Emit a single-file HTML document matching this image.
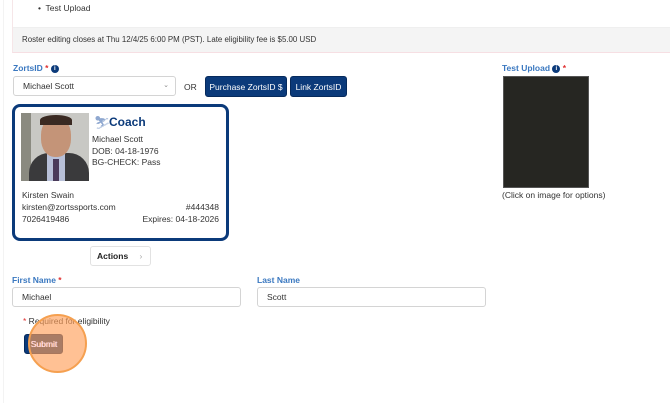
<!DOCTYPE html>
<html><head><style>
*{box-sizing:border-box;margin:0;padding:0}
body{width:670px;height:403px;background:#fff;font-family:"Liberation Sans",Arial,sans-serif;font-size:8.5px;color:#333;position:relative;overflow:hidden}
.a{position:absolute}
.lbl{color:#3a78c0;font-weight:bold;font-size:8.5px}
.req{color:#e03030}
.info{display:inline-block;width:8px;height:8px;border-radius:50%;background:#0b3a7a;color:#fff;font-size:6px;text-align:center;line-height:8px;font-weight:bold;vertical-align:1px}
.inp{border:1px solid #d4d4d4;border-radius:3px;background:#fff;padding-left:9px;line-height:18px;font-size:8.5px;color:#333}
.btn{background:#0b3a7a;color:#fff;border-radius:3px;text-align:center;font-size:8.5px;line-height:20px;border:1px solid #062a5c}
</style></head><body>
<div class="a" style="left:3px;top:0;width:1px;height:403px;background:#f3f3f3"></div>
<div class="a" style="left:12px;top:0;width:660px;height:53px;border-left:1px solid #f6e6e8;border-bottom:1px solid #f6dfe3;background:#fff"></div>
<div class="a" style="left:13px;top:27px;width:660px;height:25px;background:#f4f4f4;border-top:1px solid #efefef"></div>
<div class="a" style="left:38px;top:3px;font-size:8.5px">•&nbsp; Test Upload</div>
<div class="a" style="left:22px;top:35px;font-size:7.9px">Roster editing closes at Thu 12/4/25 6:00 PM (PST). Late eligibility fee is $5.00 USD</div>

<div class="a lbl" style="left:13px;top:63px">ZortsID <span class="req">*</span> <span class="info">i</span></div>
<div class="a inp" style="left:13px;top:76px;width:163px;height:20px">Michael Scott<span style="position:absolute;right:6px;top:0;color:#888;font-size:7px">⌄</span></div>
<div class="a" style="left:184px;top:82px">OR</div>
<div class="a btn" style="left:205px;top:76px;width:82px;height:21px">Purchase ZortsID $</div>
<div class="a btn" style="left:290px;top:76px;width:57px;height:21px">Link ZortsID</div>

<div class="a" style="left:12px;top:104px;width:217px;height:137px;border:3px solid #0b3a7a;border-radius:8px"></div>
<div class="a" style="left:21px;top:113px;width:68px;height:68px;background:#c8c8c4;overflow:hidden">
 <div class="a" style="left:0;top:0;width:10px;height:68px;background:#8a8a80"></div>
 <div class="a" style="left:8px;top:40px;width:60px;height:30px;background:#3a3a3c;border-radius:20px 20px 0 0"></div>
 <div class="a" style="left:26px;top:40px;width:18px;height:28px;background:#b8c0d8"></div>
 <div class="a" style="left:32px;top:46px;width:6px;height:22px;background:#4a3a5a"></div>
 <div class="a" style="left:20px;top:4px;width:30px;height:40px;background:#c49478;border-radius:45%"></div>
 <div class="a" style="left:19px;top:2px;width:32px;height:10px;background:#3a2a22;border-radius:50% 50% 0 0"></div>
</div>
<div class="a" style="left:94px;top:115px;color:#8fa8d0;font-size:13px">⛷</div>
<div class="a" style="left:109px;top:115px;color:#0b3a7a;font-weight:bold;font-size:12px">Coach</div>
<div class="a" style="left:92px;top:134px;line-height:11.5px">Michael Scott<br>DOB: 04-18-1976<br>BG-CHECK: Pass</div>
<div class="a" style="left:22px;top:189px;line-height:12px">Kirsten Swain<br>kirsten@zortssports.com<br>7026419486</div>
<div class="a" style="right:451px;top:201px;line-height:12px;text-align:right">#444348<br>Expires: 04-18-2026</div>
<div class="a" style="left:90px;top:246px;width:61px;height:20px;border:1px solid #e2e2e2;border-radius:3px;line-height:18px;padding-left:6px;font-weight:bold;color:#222">Actions <span style="color:#aaa;font-weight:normal;margin-left:9px">›</span></div>

<div class="a lbl" style="left:12px;top:275px">First Name <span class="req">*</span></div>
<div class="a inp" style="left:12px;top:287px;width:229px;height:20px">Michael</div>
<div class="a lbl" style="left:257px;top:275px">Last Name</div>
<div class="a inp" style="left:257px;top:287px;width:229px;height:20px">Scott</div>
<div class="a" style="left:23px;top:316px"><span class="req">*</span> Required for eligibility</div>
<div class="a btn" style="left:24px;top:334px;width:39px;height:20px;line-height:18px">Submit</div>
<div class="a" style="left:28px;top:314px;width:59px;height:59px;border-radius:50%;background:rgba(255,160,90,0.65);border:2px solid #f5a050"></div>
<div class="a" style="left:31px;top:339px;color:#fde;font-size:8.5px">Submit</div>

<div class="a lbl" style="left:502px;top:63px">Test Upload <span class="info">i</span> <span class="req">*</span></div>
<div class="a" style="left:503px;top:76px;width:86px;height:112px;background:#262622;border:1px solid #555"></div>
<div class="a" style="left:502px;top:190px">(Click on image for options)</div>
</body></html>
